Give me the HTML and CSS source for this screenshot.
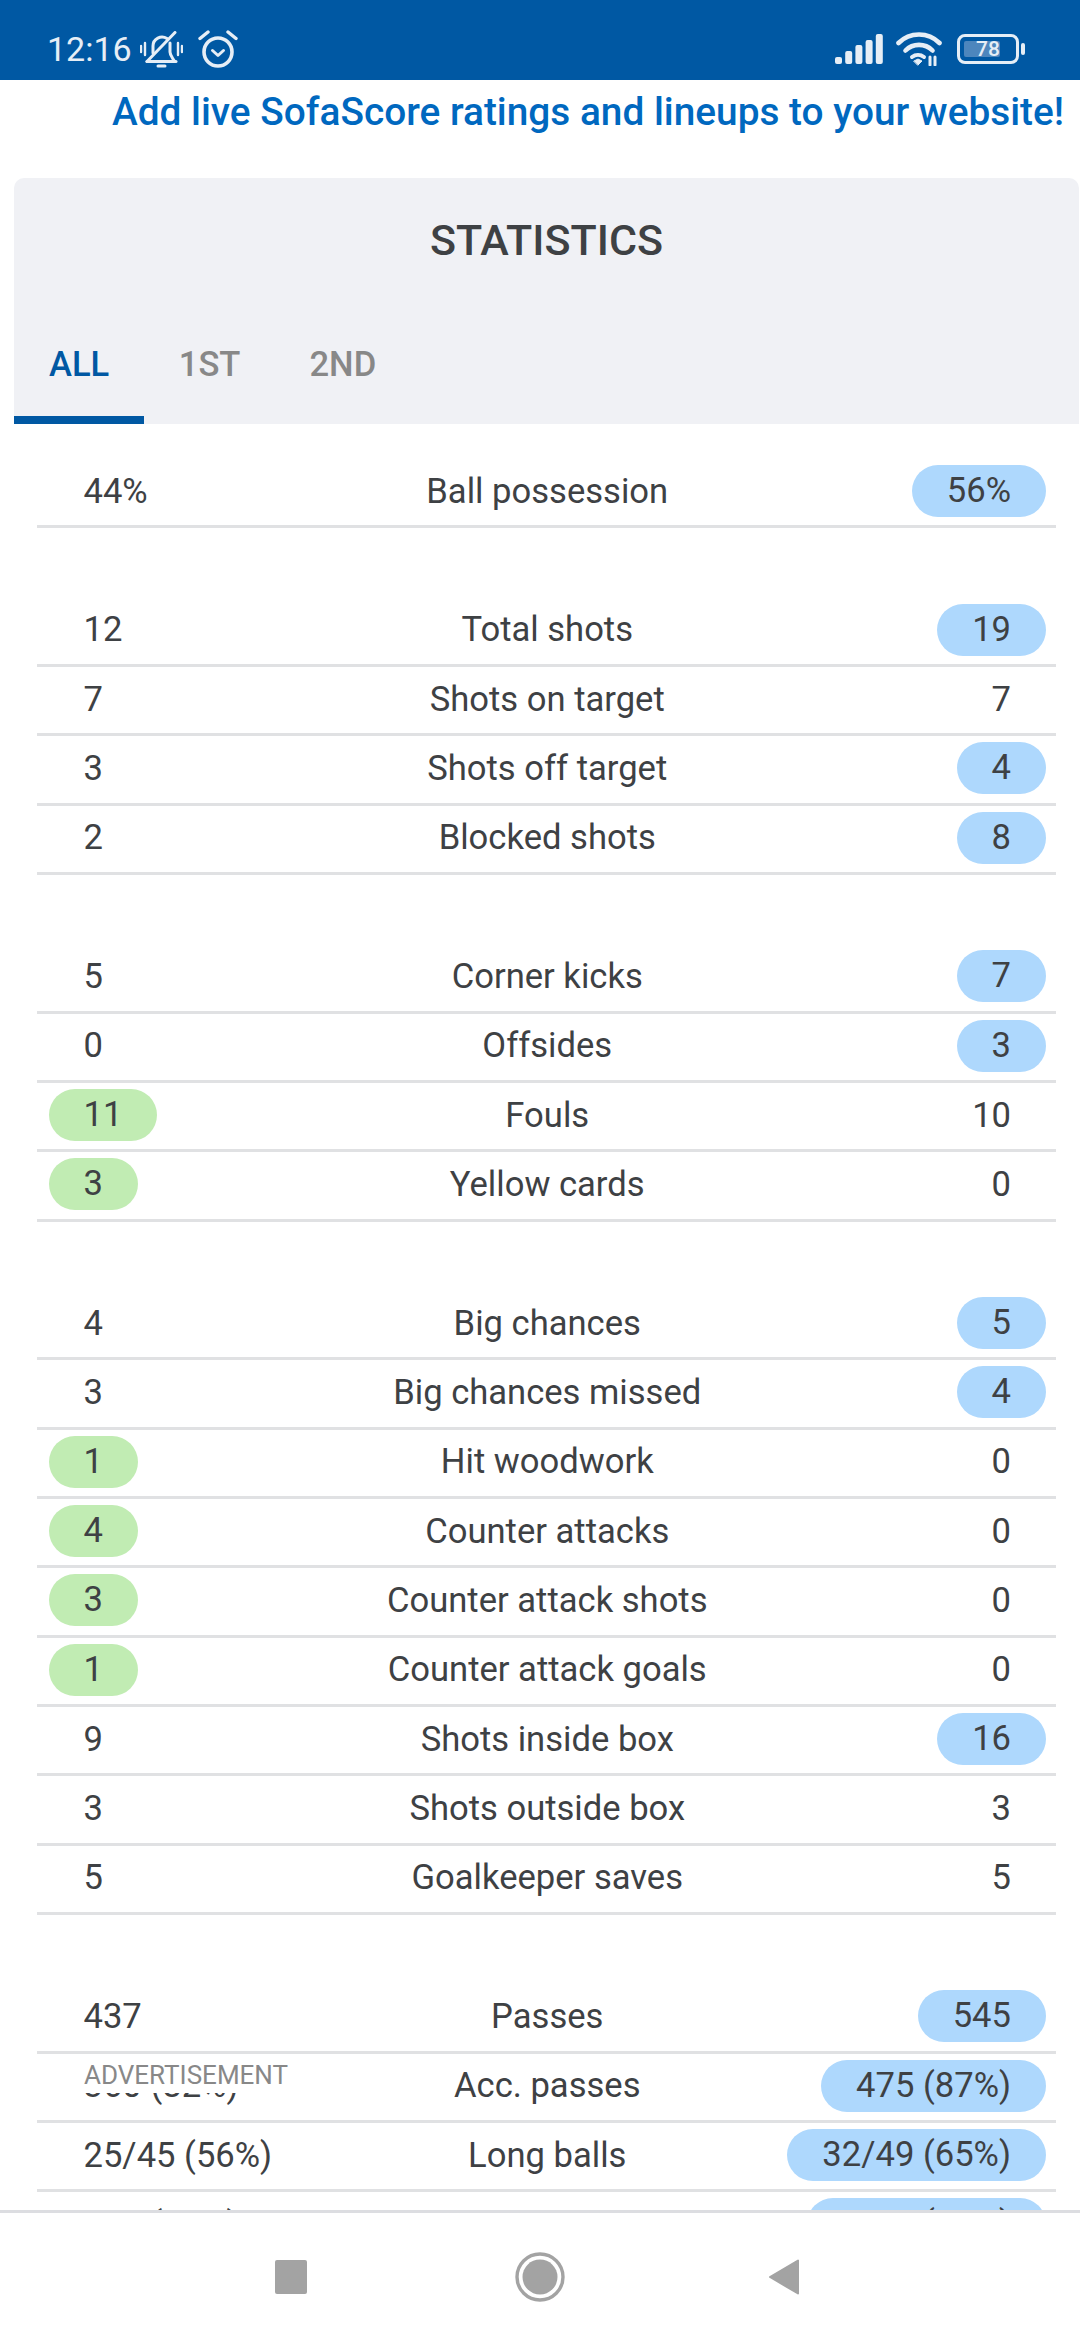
FILE: index.html
```html
<!DOCTYPE html>
<html lang="en">
<head>
<meta charset="utf-8">
<title>Statistics</title>
<link rel="stylesheet" href="styles.css">
</head>
<body>
<div class="screen">
  <header class="status">
    <div class="status-left">
      <span class="time">12:16</span>
      <svg class="ic-bell" viewBox="0 0 43 37" fill="none" stroke="#e6eef6" stroke-width="3" stroke-linecap="round" stroke-linejoin="round">
        <path d="M13 22v-7a9 9 0 0 1 14-7.4"/>
        <path d="M30 12v9c0 3 2 5 4 8.5"/>
        <path d="M7 30.5h29"/>
        <path d="M7 30.5 35 1.5"/>
        <path d="M18 35h7" stroke-width="3"/>
        <path d="M1 15v6M5 12v12M38 12v12M42 15v6" stroke-width="2.4"/>
      </svg>
      <svg class="ic-alarm" viewBox="0 0 40 38" fill="none" stroke="#e6eef6" stroke-linecap="round" stroke-linejoin="round">
        <circle cx="20" cy="22" r="14" stroke-width="3.6"/>
        <path d="M14.5 20.5l5.5 5 5.5-5" stroke-width="3"/>
        <path d="M2 8.5l8-6.5M38 8.5l-8-6.5" stroke-width="3.4"/>
      </svg>
    </div>
    <div class="status-right">
      <svg class="ic-signal" viewBox="0 0 48 30" fill="#e6eef6">
        <rect x="0" y="23" width="7" height="7" rx="2"/>
        <rect x="10.2" y="17" width="7" height="13" rx="2"/>
        <rect x="20.4" y="11" width="7" height="19" rx="2"/>
        <rect x="30.6" y="6" width="7" height="24" rx="2"/>
        <rect x="40.8" y="0" width="7" height="30" rx="2"/>
      </svg>
      <svg class="ic-wifi" viewBox="0 0 46 34" fill="none" stroke="#e6eef6" stroke-linecap="round">
        <path d="M2.5 11a29 29 0 0 1 41 0" stroke-width="4.6"/>
        <path d="M9.5 18.5a19 19 0 0 1 27 0" stroke-width="4.6"/>
        <path d="M16 25a10 10 0 0 1 12 0" stroke-width="4"/>
        <path d="M18 29l4-2 4 2-4 4z" fill="#e6eef6" stroke-width="1"/>
        <path d="M34 25v8M39 25v8" stroke-width="3"/>
      </svg>
      <div class="battery">
        <span class="battery-body"><span class="battery-fill"></span><span class="battery-num">78</span></span>
        <span class="battery-cap"></span>
      </div>
    </div>
  </header>

  <a class="promo">Add live SofaScore ratings and lineups to your website!</a>

  <main class="content">
    <section class="card">
      <div class="card-head">
        <h1 class="title">STATISTICS</h1>
        <nav class="tabs">
          <span class="tab tab-active">ALL</span>
          <span class="tab">1ST</span>
          <span class="tab">2ND</span>
        </nav>
      </div>
      <div class="table">
        <div class="row"><span class="val">44%</span><span class="label">Ball possession</span><span class="val end"><b class="pill blue">56%</b></span></div>
        <div class="spacer"></div>
        <div class="row"><span class="val">12</span><span class="label">Total shots</span><span class="val end"><b class="pill blue">19</b></span></div>
        <div class="row"><span class="val">7</span><span class="label">Shots on target</span><span class="val end">7</span></div>
        <div class="row"><span class="val">3</span><span class="label">Shots off target</span><span class="val end"><b class="pill blue">4</b></span></div>
        <div class="row"><span class="val">2</span><span class="label">Blocked shots</span><span class="val end"><b class="pill blue">8</b></span></div>
        <div class="spacer"></div>
        <div class="row"><span class="val">5</span><span class="label">Corner kicks</span><span class="val end"><b class="pill blue">7</b></span></div>
        <div class="row"><span class="val">0</span><span class="label">Offsides</span><span class="val end"><b class="pill blue">3</b></span></div>
        <div class="row"><span class="val"><b class="pill green">11</b></span><span class="label">Fouls</span><span class="val end">10</span></div>
        <div class="row"><span class="val"><b class="pill green">3</b></span><span class="label">Yellow cards</span><span class="val end">0</span></div>
        <div class="spacer"></div>
        <div class="row"><span class="val">4</span><span class="label">Big chances</span><span class="val end"><b class="pill blue">5</b></span></div>
        <div class="row"><span class="val">3</span><span class="label">Big chances missed</span><span class="val end"><b class="pill blue">4</b></span></div>
        <div class="row"><span class="val"><b class="pill green">1</b></span><span class="label">Hit woodwork</span><span class="val end">0</span></div>
        <div class="row"><span class="val"><b class="pill green">4</b></span><span class="label">Counter attacks</span><span class="val end">0</span></div>
        <div class="row"><span class="val"><b class="pill green">3</b></span><span class="label">Counter attack shots</span><span class="val end">0</span></div>
        <div class="row"><span class="val"><b class="pill green">1</b></span><span class="label">Counter attack goals</span><span class="val end">0</span></div>
        <div class="row"><span class="val">9</span><span class="label">Shots inside box</span><span class="val end"><b class="pill blue">16</b></span></div>
        <div class="row"><span class="val">3</span><span class="label">Shots outside box</span><span class="val end">3</span></div>
        <div class="row"><span class="val">5</span><span class="label">Goalkeeper saves</span><span class="val end">5</span></div>
        <div class="spacer"></div>
        <div class="row"><span class="val">437</span><span class="label">Passes</span><span class="val end"><b class="pill blue">545</b></span></div>
        <div class="row"><span class="val">360 (82%)</span><span class="label">Acc. passes</span><span class="val end"><b class="pill blue">475 (87%)</b></span></div>
        <div class="row"><span class="val">25/45 (56%)</span><span class="label">Long balls</span><span class="val end"><b class="pill blue">32/49 (65%)</b></span></div>
        <div class="row"><span class="val">182 (41%)</span><span class="label">Crosses</span><span class="val end"><b class="pill blue">7/10 (70%)</b></span></div>
      </div>
    </section>
    <div class="ad">ADVERTISEMENT</div>
  </main>

  <footer class="navbar">
    <span class="nav-square"></span>
    <svg class="nav-home" viewBox="0 0 50 50"><circle cx="25" cy="25" r="23" fill="none" stroke="#a3a3a3" stroke-width="3.4"/><circle cx="25" cy="25" r="17.5" fill="#a3a3a3"/></svg>
    <svg class="nav-back" viewBox="0 0 32 38"><path d="M30 2.5v33L2 19z" fill="#a3a3a3" stroke="#a3a3a3" stroke-width="2" stroke-linejoin="round"/></svg>
  </footer>
</div>
</body>
</html>
```
FILE: styles.css
```css
* { box-sizing: border-box; }
html, body { margin: 0; padding: 0; background: #fff; }
body { font-family: Roboto, "Liberation Sans", sans-serif; color: #3e4144; }
.screen { width: 1080px; height: 2340px; display: flex; flex-direction: column; overflow: hidden; }

.status { height: 80px; flex: none; background: #0058a3; display: flex; justify-content: space-between; align-items: center; padding: 18px 55px 0 47px; color: #e6eef6; }
.status-left, .status-right { display: flex; align-items: center; }
.time { font-size: 34px; line-height: 40px; }
.ic-bell { width: 43px; height: 37px; margin-left: 8px; }
.ic-alarm { width: 40px; height: 38px; margin-left: 15px; }
.ic-signal { width: 48px; height: 30px; }
.ic-wifi { width: 46px; height: 34px; margin-left: 13px; }
.battery { display: flex; align-items: center; margin-left: 15px; }
.battery-body { position: relative; width: 62px; height: 30px; border: 3px solid #e6eef6; border-radius: 8px; display: block; }
.battery-fill { position: absolute; left: 4px; top: 4px; bottom: 4px; width: 36px; background: #4d86bd; border-radius: 2px; }
.battery-num { position: absolute; inset: 0; text-align: center; font-size: 21px; line-height: 24px; font-weight: 500; color: #e6eef6; }
.battery-cap { width: 4px; height: 12px; margin-left: 2px; background: #e6eef6; border-radius: 2px; }

.promo { flex: none; height: 98px; padding: 10px 0 0 112px; font-size: 38.8px; line-height: 44px; font-weight: 500; color: #0068bf; white-space: nowrap; display: block; }

.content { position: relative; flex: 1; min-height: 0; overflow: hidden; padding: 0 1px 0 14px; }
.card-head { background: #f0f1f5; border-radius: 10px 10px 0 0; height: 246px; display: flex; flex-direction: column; justify-content: space-between; }
.title { margin: 0; padding-top: 40px; text-align: center; font-size: 43px; line-height: 44px; font-weight: 500; color: #3e4144; }
.tabs { display: flex; }
.tab { height: 82px; padding: 2px 34.5px 0; font-size: 34.6px; line-height: 40px; font-weight: 500; color: #888; border-bottom: 8px solid transparent; }
.tab-active { padding: 2px 35px 0; color: #0058a3; border-bottom-color: #0058a3; }

.table { padding: 35px 23px 0; }
.row { height: 69.33px; display: grid; grid-template-columns: 1fr 400px 1fr; align-items: center; padding: 0 10px 2px 11.5px; border-bottom: 3px solid #e0e1e3; font-size: 34.6px; line-height: 51px; white-space: nowrap; }
.spacer { height: 69.33px; }
.label { text-align: center; }
.val { padding: 0 35px; }
.val.end { text-align: right; }
.val:has(.pill) { padding: 0; }
.pill { display: inline-block; height: 52px; padding: 0 35px; border-radius: 26px; font-weight: 400; }
.blue { background: #aed8fd; }
.green { background: #c1ecb3; }

.ad { position: absolute; left: 84px; top: 1883px; width: 230px; height: 32px; background: #fff; font-size: 26px; line-height: 28px; color: #888; }

.navbar { flex: none; height: 130px; background: #fff; border-top: 3px solid #dcdde1; position: relative; z-index: 1; display: flex; align-items: center; }
.nav-square { width: 32px; height: 34px; margin-left: 275px; background: #a3a3a3; border-radius: 2px; }
.nav-home { width: 50px; height: 50px; margin-left: 208px; }
.nav-back { width: 32px; height: 38px; margin-left: 203px; }
```
